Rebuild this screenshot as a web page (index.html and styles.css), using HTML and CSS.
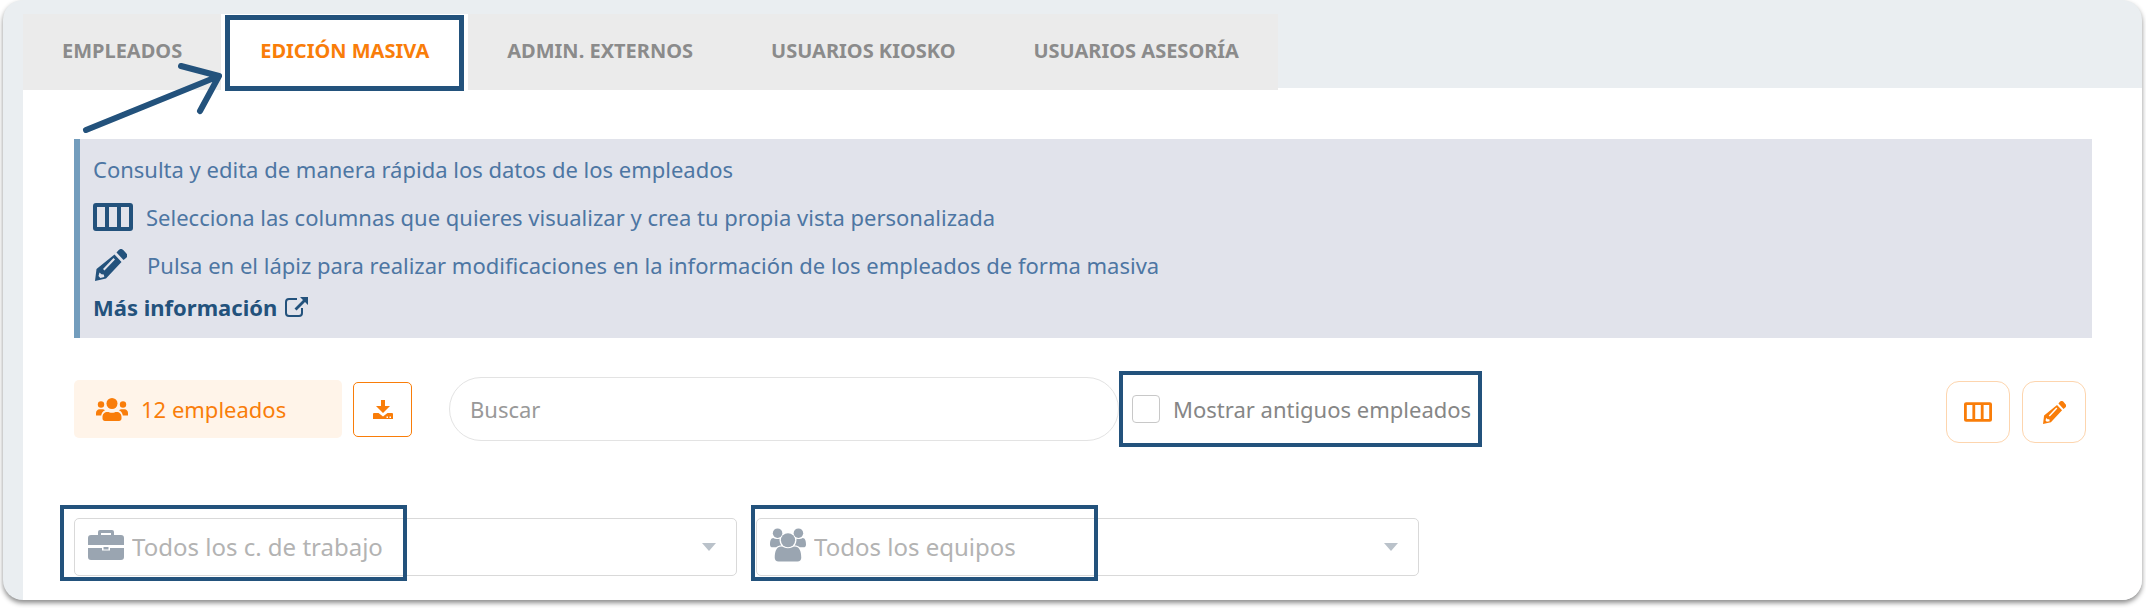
FILE: index.html
```html
<!DOCTYPE html>
<html lang="es">

<head>
    <meta charset="UTF-8">
    <meta name="viewport" content="width=device-width, initial-scale=1.0">
    <title>Edición masiva</title>
    <link rel="stylesheet" href="styles.css">
</head>

<body>
    <!-- shared icons -->
    <svg class="sprite" aria-hidden="true">
        <symbol id="columns" viewBox="0 0 40 28">
            <path fill="currentColor" fill-rule="evenodd" d="M3 0h34a3 3 0 0 1 3 3v22a3 3 0 0 1-3 3H3a3 3 0 0 1-3-3V3a3 3 0 0 1 3-3zM4 4v20h8V4zM16 4v20h8V4zM28 4v20h8V4z" />
        </symbol>
        <symbol id="pencil" viewBox="0 0 32 32">
            <path fill="currentColor" fill-rule="evenodd" d="M21.500 3.500l2-2.300a3.500 3.500 0 0 1 5 0l2.500 2.800a3.500 3.500 0 0 1 0 5L28.500 11zM19.500 5.500l7 7.500L11 29.500 0 32l1.500-12zM8 20l1.500 1.500L20 10.500 18.500 9zM4.500 23.500L3.500 27l1.800 2 4-1-.5-2.500-2.300-.2z" />
        </symbol>
        <symbol id="users" viewBox="0 0 32 23">
            <g fill="currentColor">
                <circle cx="16" cy="5.500" r="5.500" />
                <circle cx="5" cy="6.500" r="3.200" />
                <circle cx="27" cy="6.500" r="3.200" />
                <path d="M6.500 20.500V19c0-3 2-5 5-5 1.500 0 2.500.8 4.500.8s3-.8 4.500-.8c3 0 5 2 5 5v1.500c0 1.500-1 2.500-2.500 2.500H9c-1.500 0-2.500-1-2.500-2.500zM0 17.500V15c0-2 1.500-3.800 3.500-3.800h3c1 0 1.800.4 2.500 1-2.500 1.300-3.500 3-3.800 5.300zM32 17.500V15c0-2-1.500-3.800-3.500-3.800h-3c-1 0-1.800.4-2.500 1 2.500 1.300 3.500 3 3.800 5.300z" />
            </g>
        </symbol>
    </svg>

    <div class="page">
        <nav class="tabs">
            <a class="tab" href="#">EMPLEADOS</a>
            <a class="tab active" href="#">EDICIÓN MASIVA<span class="mark"></span></a>
            <a class="tab" href="#">ADMIN. EXTERNOS</a>
            <a class="tab" href="#">USUARIOS KIOSKO</a>
            <a class="tab" href="#">USUARIOS ASESORÍA</a>
            <svg class="arrow" viewBox="0 0 142 72" aria-hidden="true">
                <path d="M5 68L138 14M100 4l38 10-19 35" />
            </svg>
        </nav>

        <main class="content">
            <section class="info">
                <p>Consulta y edita de manera rápida los datos de los empleados</p>
                <p><svg class="ico-columns"><use href="#columns" /></svg>Selecciona las columnas que quieres visualizar y crea tu propia vista personalizada</p>
                <p><svg class="ico-pencil"><use href="#pencil" /></svg>Pulsa en el lápiz para realizar modificaciones en la información de los empleados de forma masiva</p>
                <a class="more" href="#">Más información
                    <svg viewBox="0 0 23 20" aria-hidden="true">
                        <path d="M12 2H4a3 3 0 0 0-3 3v11a3 3 0 0 0 3 3h10a3 3 0 0 0 3-3v-5" fill="none" stroke="currentColor" stroke-width="2" />
                        <path d="M15 0h8v8l-3-3-8.500 8.500-2-2L18 3z" fill="currentColor" />
                    </svg>
                </a>
            </section>

            <div class="toolbar">
                <div class="count"><svg><use href="#users" /></svg>12 empleados</div>
                <button class="download" type="button" aria-label="Descargar">
                    <svg viewBox="0 0 20 19">
                        <path fill="currentColor" fill-rule="evenodd" d="M8 0h4v6h5l-7 7-7-7h5zM1 13h4.500l4.500 3.500 4.500-3.500H19a1 1 0 0 1 1 1v5H0v-5a1 1 0 0 1 1-1zM13.500 16.500v1.500H15v-1.500zM16.500 16.500v1.500H18v-1.500z" />
                    </svg>
                </button>
                <input class="search" type="search" placeholder="Buscar" aria-label="Buscar">
                <label class="old"><input type="checkbox">Mostrar antiguos empleados<span class="mark"></span></label>
                <div class="actions">
                    <button type="button" aria-label="Columnas"><svg class="ico-columns"><use href="#columns" /></svg></button>
                    <button type="button" aria-label="Editar"><svg class="ico-pencil"><use href="#pencil" /></svg></button>
                </div>
            </div>

            <div class="filters">
                <div class="filter">
                    <svg class="ico" viewBox="0 0 36 30" aria-hidden="true">
                        <path fill="currentColor" fill-rule="evenodd" d="M10 5V2a2 2 0 0 1 2-2h12a2 2 0 0 1 2 2v3h7a3 3 0 0 1 3 3v7H0V8a3 3 0 0 1 3-3zM13 5h10V3H13zM0 18h14v2.500h8V18h14v9a3 3 0 0 1-3 3H3a3 3 0 0 1-3-3zM15.500 17h5v2.500h-5z" />
                    </svg>
                    <select aria-label="Centro de trabajo">
                        <option>Todos los c. de trabajo</option>
                    </select>
                    <span class="caret"></span>
                    <span class="mark"></span>
                </div>
                <div class="filter">
                    <svg class="ico" viewBox="0 0 38 35" aria-hidden="true">
                        <g fill="currentColor">
                            <circle cx="8" cy="5" r="5" />
                            <circle cx="30" cy="5" r="5" />
                            <circle cx="19" cy="12.500" r="7.500" />
                            <path d="M5 31c0-7 2-12 7-12 2 0 3.500 2 7 2s5-2 7-2c5 0 7 5 7 12 0 2.500-1.500 4-4 4H9c-2.500 0-4-1.500-4-4zM0 17c0-4 1-7 3.500-7 1.500 1 4 1.500 6.500.8 0 3.200.5 5 2 7.200-2.500 0-4 .5-5.500 2H3c-2 0-3-1-3-3zM38 17c0-4-1-7-3.500-7-1.500 1-4 1.500-6.500.8 0 3.200-.5 5-2 7.200 2.500 0 4 .5 5.500 2H35c2 0 3-1 3-3z" />
                        </g>
                    </svg>
                    <select aria-label="Equipo">
                        <option>Todos los equipos</option>
                    </select>
                    <span class="caret"></span>
                    <span class="mark"></span>
                </div>
            </div>
        </main>
    </div>
</body>

</html>
```
FILE: styles.css
```css
* {
    box-sizing: border-box;
}

body {
    margin: 0;
    background-color: #fff;
    font-family: "Noto Sans", "Open Sans", sans-serif;
    font-size: 22px;
    color: #868686;
}

button,
input,
select {
    font: inherit;
    color: inherit;
}

.sprite {
    position: absolute;
    width: 0;
    height: 0;
}

.page {
    margin: 0 4px 8px 3px;
    padding: 14px 0 0 20px;
    border-radius: 20px;
    background-color: #eaeef1;
    box-shadow: 0 3px 5px rgba(0, 0, 0, 0.45);
}

/* tabs */
.tabs {
    position: relative;
    display: flex;
    width: fit-content;
    margin-bottom: -2px;
    background-color: #ebebeb;
    z-index: 1;
}

.tab {
    position: relative;
    padding: 23px 39px 25px;
    font-size: 20px;
    line-height: 28px;
    font-weight: 700;
    color: #8b8b8b;
    text-decoration: none;
}

.tab.active {
    background-color: #fff;
    color: #f97d09;
}

/* outlines and arrow that point at parts of the page */
.mark {
    position: absolute;
    border: 4px solid #23527c;
    pointer-events: none;
}

.tab .mark {
    inset: 1px 4px -1px 4px;
    border-width: 5px;
}

.arrow {
    position: absolute;
    left: 58px;
    top: 48px;
    width: 142px;
    height: 72px;
    fill: none;
    stroke: #23527c;
    stroke-width: 6;
    stroke-linecap: round;
    stroke-linejoin: round;
}

.content {
    padding: 51px 50px 24px 51px;
    background-color: #fff;
    border-bottom-right-radius: 20px;
}

/* info box */
.info {
    padding: 6px 13px 13px;
    border-left: 6px solid #739dbd;
    background-color: #e1e3eb;
    color: #4d76a3;
}

.info p {
    display: flex;
    align-items: center;
    margin: 0;
    line-height: 48px;
}

.info .ico-columns {
    width: 40px;
    height: 28px;
    margin-right: 13px;
    color: #23527c;
}

.info .ico-pencil {
    width: 32px;
    height: 32px;
    margin: 0 20px 0 2px;
    color: #23527c;
}

.more {
    display: flex;
    align-items: center;
    gap: 8px;
    width: fit-content;
    line-height: 36px;
    font-weight: 700;
    color: #23527c;
    text-decoration: none;
}

.more svg {
    width: 23px;
    height: 20px;
}

/* toolbar */
.toolbar {
    display: flex;
    align-items: center;
    margin-top: 37px;
}

.count {
    display: flex;
    align-items: center;
    gap: 13px;
    width: 268px;
    height: 58px;
    padding: 0 22px;
    border-radius: 5px;
    background-color: #fff4e9;
    color: #f97d09;
}

.count svg {
    width: 32px;
    height: 23px;
}

.download {
    display: flex;
    align-items: center;
    justify-content: center;
    width: 59px;
    height: 55px;
    margin-left: 11px;
    border: 1px solid #f97d09;
    border-radius: 5px;
    background-color: #fff;
    color: #f97d09;
}

.download svg {
    width: 20px;
    height: 19px;
}

.search {
    flex: 0 1 670px;
    min-width: 0;
    height: 64px;
    margin-left: 37px;
    padding: 0 20px;
    border: 1px solid #e3e3e3;
    border-radius: 32px;
    background-color: #fff;
    appearance: none;
}

.search::placeholder {
    color: #999;
}

.old {
    position: relative;
    display: flex;
    align-items: center;
    gap: 13px;
    height: 76px;
    margin: -6px 0;
    padding: 0 11px 0 13px;
    white-space: nowrap;
}

.old input {
    width: 28px;
    height: 28px;
    margin: 0;
    border: 1px solid #c8c8c8;
    border-radius: 4px;
    background-color: #fff;
    appearance: none;
}

.old .mark {
    inset: 0;
}

.actions {
    display: flex;
    gap: 12px;
    margin: 6px 6px 0 auto;
}

.actions button {
    display: flex;
    align-items: center;
    justify-content: center;
    width: 64px;
    height: 62px;
    padding: 0;
    border: 1px solid #fdd5ae;
    border-radius: 13px;
    background-color: #fff;
    color: #f97d09;
}

.actions .ico-columns {
    width: 28px;
    height: 20px;
}

.actions .ico-pencil {
    width: 23px;
    height: 23px;
}

/* filters */
.filters {
    display: flex;
    gap: 19px;
    margin-top: 75px;
}

.filter {
    position: relative;
    display: flex;
    flex: 0 1 663px;
    align-items: center;
    height: 58px;
    padding: 0 20px 0 13px;
    border: 1px solid #d9d9d9;
    border-radius: 5px;
    font-size: 24px;
    color: #b3b3b3;
}

.filter .ico {
    flex: none;
    width: 36px;
    height: 34px;
    margin-bottom: 4px;
    color: #9aa5b1;
}

.filter select {
    flex: 1;
    min-width: 0;
    height: 56px;
    padding: 0 0 2px 8px;
    border: 0;
    background: none;
    appearance: none;
}

.caret {
    border: 7px solid transparent;
    border-top: 8px solid #bac2ca;
    border-bottom: 0;
    pointer-events: none;
}

.filter .mark {
    top: -14px;
    left: -15px;
    width: 347px;
    height: 76px;
}

.filter + .filter .mark {
    left: -6px;
}
```
